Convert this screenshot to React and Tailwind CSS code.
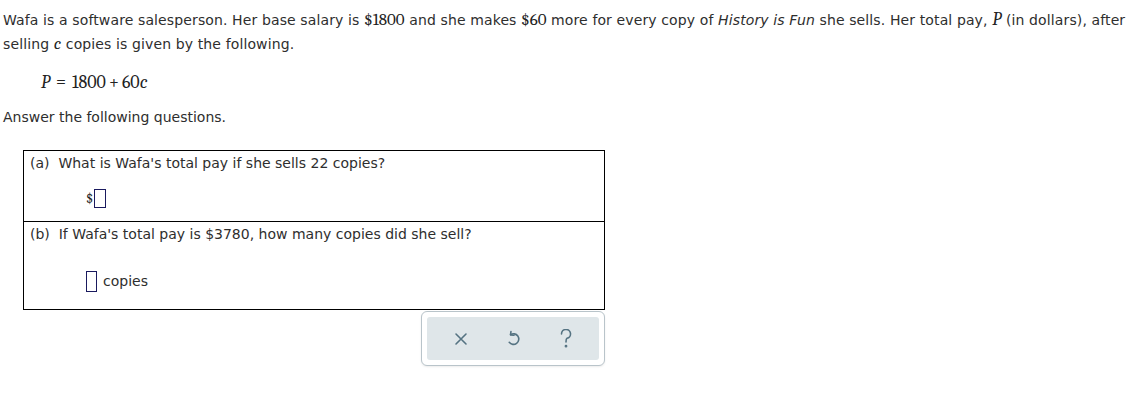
export default function App() {
  return (
    <div className="min-h-[407px] w-[1143px] bg-white font-['DejaVu_Sans',Verdana,sans-serif] text-[14px] text-[#2e2e2e]">
      <div className="pl-[3px] pt-[8px]">
        <p className="leading-[24px] tracking-[0.12px]">
          Wafa is a software salesperson. Her base salary is{' '}
          <span className="font-serif text-[17px] tracking-normal text-[#222]">$1800</span> and she makes{' '}
          <span className="font-serif text-[17px] tracking-normal text-[#222]">$60</span> more for every copy of{' '}
          <i>History is Fun</i> she sells. Her total pay,{' '}
          <i className="font-serif text-[18px] text-[#222]">P</i> (in dollars), after
          <br />
          selling <i className="font-serif text-[17px] text-[#222]">c</i> copies is given by the following.
        </p>
        <div className="mt-[15px] pl-[38px] font-serif text-[18px] leading-[24px] text-[#222]">
          <i>P</i>
          <span className="mx-[6px]">=</span>1800<span className="mx-[3px]">+</span>60<i>c</i>
        </div>
        <p className="mt-[10px] leading-[24px]">Answer the following questions.</p>
      </div>

      <div className="ml-[23px] mt-[21px] w-[582px] border border-black">
        <div className="h-[71px] border-b border-black px-[6px] pt-[2px]">
          <p className="leading-[20px]">(a)&nbsp; What is Wafa's total pay if she sells 22 copies?</p>
          <div className="mt-[15px] flex items-center pl-[56px]">
            <span className="font-serif text-[14px] text-[#222]">$</span>
            <span className="ml-[1px] h-[19px] w-[12px] border border-[#1a1a5e]"></span>
          </div>
        </div>
        <div className="h-[87px] px-[6px] pt-[2px]">
          <p className="leading-[20px]">(b)&nbsp; If Wafa's total pay is $3780, how many copies did she sell?</p>
          <div className="mt-[27px] flex items-center gap-[6px] pl-[56px]">
            <span className="h-[21px] w-[11px] border border-[#1a1a5e]"></span>
            <span>copies</span>
          </div>
        </div>
      </div>

      <div className="ml-[421px] mt-[1px] w-[184px] rounded-[6px] border border-[#b9c4ca] bg-white p-[5px] shadow-[0_1px_2px_rgba(0,0,0,0.08)]">
        <div className="flex h-[43px] items-center justify-around rounded-[3px] bg-[#dfe6e9] px-[8px] text-[#557382]">
          <svg width="14" height="14" viewBox="0 0 14 14" fill="none" stroke="currentColor" strokeWidth="1.6" strokeLinecap="round">
            <path d="M2 2 L12 12 M12 2 L2 12" />
          </svg>
          <svg width="15" height="17" viewBox="0 0 14 16" fill="none" stroke="currentColor" strokeWidth="1.5" strokeLinecap="round" strokeLinejoin="round">
            <path d="M4.2 4.4 A5 5 0 1 1 3 11.6" />
            <path d="M4.6 1.4 L4.2 4.6 L7.4 5" />
          </svg>
          <svg width="12" height="20" viewBox="0 0 12 20" fill="none" stroke="currentColor" strokeWidth="1.6" strokeLinecap="round">
            <path d="M1.5 5 A4.5 4.5 0 1 1 7 9.3 C6 9.8 6 10.8 6 13" />
            <circle cx="6" cy="17.2" r="0.6" fill="currentColor" />
          </svg>
        </div>
      </div>
    </div>
  );
}
